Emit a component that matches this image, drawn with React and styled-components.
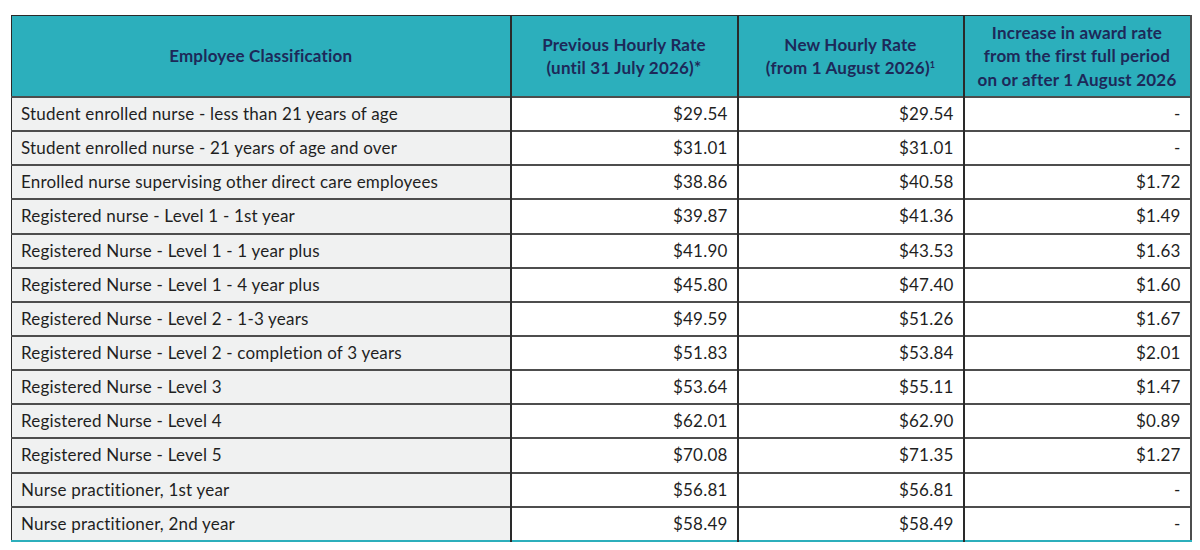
import React from "react";
import styled, { createGlobalStyle } from "styled-components";

const headerBg = "#2cafbc";
const headerInk = "#1d2959";
const lineDark = "#2a2a2a";
const lineRow = "#4d4d4d";

const rates = [
  ["Student enrolled nurse - less than 21 years of age", "$29.54", "$29.54", "-"],
  ["Student enrolled nurse - 21 years of age and over", "$31.01", "$31.01", "-"],
  ["Enrolled nurse supervising other direct care employees", "$38.86", "$40.58", "$1.72"],
  ["Registered nurse - Level 1 - 1st year", "$39.87", "$41.36", "$1.49"],
  ["Registered Nurse - Level 1 - 1 year plus", "$41.90", "$43.53", "$1.63"],
  ["Registered Nurse - Level 1 - 4 year plus", "$45.80", "$47.40", "$1.60"],
  ["Registered Nurse - Level 2 - 1-3 years", "$49.59", "$51.26", "$1.67"],
  ["Registered Nurse - Level 2 - completion of 3 years", "$51.83", "$53.84", "$2.01"],
  ["Registered Nurse - Level 3", "$53.64", "$55.11", "$1.47"],
  ["Registered Nurse - Level 4", "$62.01", "$62.90", "$0.89"],
  ["Registered Nurse - Level 5", "$70.08", "$71.35", "$1.27"],
  ["Nurse practitioner, 1st year", "$56.81", "$56.81", "-"],
  ["Nurse practitioner, 2nd year", "$58.49", "$58.49", "-"],
];

const GlobalStyle = createGlobalStyle`
  html, body {
    margin: 0;
    background: #ffffff;
  }
  body {
    font-family: Lato, "Open Sans", "Liberation Sans", sans-serif;
    color: #1f1f1f;
  }
`;

const Page = styled.div`
  width: 1200px;
  height: 550px;
  padding: 15px 10px 0 11px;
  box-sizing: border-box;
`;

const Table = styled.table`
  width: 1179px;
  border-collapse: collapse;
  table-layout: fixed;
  border-top: 1px solid ${lineDark};
  border-left: 1px solid ${lineDark};
  border-right: 2px solid ${lineRow};
  border-bottom: 2px solid ${headerBg};
`;

const HeadCell = styled.th`
  background: ${headerBg};
  color: ${headerInk};
  font-size: 17px;
  font-weight: 700;
  letter-spacing: 0.2px;
  line-height: 23.5px;
  height: 80px;
  padding: 0 8px;
  text-align: center;
  vertical-align: middle;
  border-left: 2px solid ${lineDark};
  &:first-child {
    border-left: none;
  }

  sup {
    font-size: 9px;
    line-height: 0;
    vertical-align: 6px;
  }
`;

const Row = styled.tr`
  height: 34.15px;
`;

const Cell = styled.td`
  font-size: 17px;
  letter-spacing: 0.2px;
  line-height: 20px;
  padding: 0 9px;
  background: ${({ $label }) => ($label ? "#f0f1f1" : "#ffffff")};
  text-align: ${({ $label }) => ($label ? "left" : "right")};
  border-top: 2px solid ${lineRow};
  border-left: 2px solid ${lineDark};
  white-space: nowrap;
  &:first-child {
    border-left: none;
  }
`;

export default function App() {
  return (
    <>
      <GlobalStyle />
      <Page>
        <Table>
          <colgroup>
            <col style={{ width: 499 }} />
            <col style={{ width: 227 }} />
            <col style={{ width: 226 }} />
            <col style={{ width: 227 }} />
          </colgroup>
          <thead>
            <tr>
              <HeadCell>Employee Classification</HeadCell>
              <HeadCell>
                Previous Hourly Rate
                <br />
                (until 31 July 2026)*
              </HeadCell>
              <HeadCell>
                New Hourly Rate
                <br />
                (from 1 August 2026)<sup>1</sup>
              </HeadCell>
              <HeadCell>
                Increase in award rate
                <br />
                from the first full period
                <br />
                on or after 1 August 2026
              </HeadCell>
            </tr>
          </thead>
          <tbody>
            {rates.map(([label, prev, next, diff]) => (
              <Row key={label}>
                <Cell $label>{label}</Cell>
                <Cell>{prev}</Cell>
                <Cell>{next}</Cell>
                <Cell>{diff}</Cell>
              </Row>
            ))}
          </tbody>
        </Table>
      </Page>
    </>
  );
}
